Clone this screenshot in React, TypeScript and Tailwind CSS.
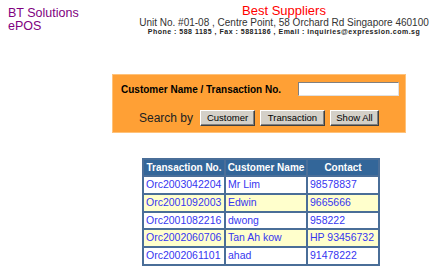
import React from "react";

const rows = [
  { no: "Orc2003042204", name: "Mr Lim", contact: "98578837" },
  { no: "Orc2001092003", name: "Edwin", contact: "9665666" },
  { no: "Orc2001082216", name: "dwong", contact: "958222" },
  { no: "Orc2002060706", name: "Tan Ah kow", contact: "HP 93456732" },
  { no: "Orc2002061101", name: "ahad", contact: "91478222" },
];

const BUTTON =
  "h-[16px] border border-t-white border-l-white border-r-[#404040] border-b-[#404040] bg-[#d4d0c8] text-[9.5px] leading-none text-black shadow-[inset_-1px_-1px_#808080]";

export default function App() {
  return (
    <div className="relative h-[272px] w-[438px] overflow-hidden bg-white font-['Liberation_Sans',Arial,sans-serif]">
      {/* header */}
      <div className="flex h-[40px]">
        <div className="w-[130px] pl-[8px] pt-[7px] text-[12.5px] leading-[12.5px] text-[#800080]">
          <div>BT Solutions</div>
          <div>ePOS</div>
        </div>
        <div className="flex-1 pt-[4px] text-center">
          <div className="text-[13px] leading-[13px] text-[#ff0000]">Best Suppliers</div>
          <div className="text-[10px] leading-[11px] text-[#333]">
            Unit No. #01-08 , Centre Point, 58 Orchard Rd Singapore 460100
          </div>
          <div className="text-[7px] font-bold leading-[8px] tracking-[0.5px] text-[#222]">
            Phone : 588 1185 , Fax : 5881186 , Email : inquiries@expression.com.sg
          </div>
        </div>
      </div>

      {/* search box */}
      <div className="ml-[112px] mt-[34px] h-[59px] w-[294px] border border-[#ffc27a] bg-[#ffa035]">
        <div className="mt-[7px] flex h-[14px] items-center pl-[8px]">
          <span className="w-[177px] text-[10px] font-bold text-black">Customer Name / Transaction No.</span>
          <input
            type="text"
            className="h-[14px] w-[101px] border border-t-[#808080] border-l-[#808080] border-r-[#e0e0e0] border-b-[#e0e0e0] bg-white outline-none"
          />
        </div>
        <div className="mt-[14px] flex h-[16px] items-center pl-[26px]">
          <span className="w-[61px] text-[12px] text-[#222]">Search by</span>
          <div className="flex gap-[5px]">
            <button type="button" className={`${BUTTON} w-[55px]`}>Customer</button>
            <button type="button" className={`${BUTTON} w-[65px]`}>Transaction</button>
            <button type="button" className={`${BUTTON} w-[49px]`}>Show All</button>
          </div>
        </div>
      </div>

      {/* results */}
      <table className="ml-[142px] mt-[25px] w-[236px] table-fixed border-collapse">
        <thead>
          <tr className="bg-[#336699]">
            <th className="h-[17px] w-[82px] border-2 border-[#4a6e98] p-0 text-center text-[10px] font-bold text-white">
              Transaction No.
            </th>
            <th className="h-[17px] w-[82px] border-2 border-[#4a6e98] p-0 text-center text-[10px] font-bold text-white">
              Customer Name
            </th>
            <th className="h-[17px] w-[72px] border-2 border-[#4a6e98] p-0 text-center text-[10px] font-bold text-white">
              Contact
            </th>
          </tr>
        </thead>
        <tbody>
          {rows.map((r, i) => (
            <tr key={r.no} className={i % 2 === 1 ? "bg-[#ffffcc]" : "bg-white"}>
              <td className="h-[17px] border-2 border-[#4a6e98] px-[2px] py-0 text-[10.5px] whitespace-nowrap text-[#3636f0]">
                {r.no}
              </td>
              <td className="h-[17px] border-2 border-[#4a6e98] px-[2px] py-0 text-[10.5px] whitespace-nowrap text-[#3636f0]">
                {r.name}
              </td>
              <td className="h-[17px] border-2 border-[#4a6e98] px-[2px] py-0 text-[10.5px] whitespace-nowrap text-[#3636f0]">
                {r.contact}
              </td>
            </tr>
          ))}
        </tbody>
      </table>
    </div>
  );
}
